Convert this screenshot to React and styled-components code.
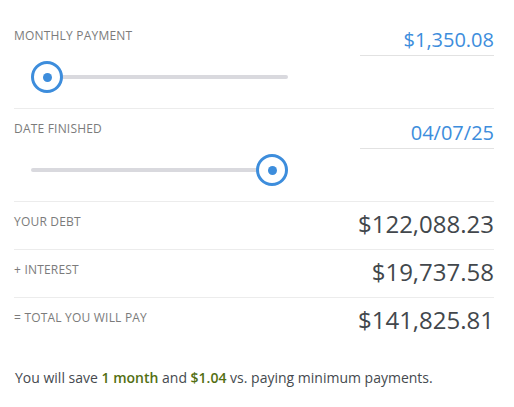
import React from "react";
import styled, { createGlobalStyle } from "styled-components";

const Global = createGlobalStyle`
  html, body { margin: 0; padding: 0; background: #fff; }
  body { font-family: "Open Sans", "Liberation Sans", sans-serif; }
  * { box-sizing: border-box; }
`;

const Wrapper = styled.div`
  width: 514px;
  padding: 16px 20px 0 14px;
`;

const Section = styled.div`
  height: 93px;
  border-bottom: 1px solid #ececec;
  padding-top: 12px;
`;

const Header = styled.div`
  display: flex;
  justify-content: space-between;
  align-items: flex-start;
`;

const Label = styled.div`
  font-size: 12px;
  line-height: 15px;
  letter-spacing: 0.2px;
  color: #7b7b7b;
  text-transform: uppercase;
  margin-top: ${(p) => p.$offset || 0}px;
`;

const InputValue = styled.div`
  width: 134px;
  text-align: right;
  font-size: 20px;
  line-height: 24px;
  color: #3d8ddc;
  padding-bottom: 3px;
  border-bottom: 1px solid #e2e2e2;
`;

const Slider = styled.div`
  position: relative;
  margin: 5px 0 0 17px;
  width: 257px;
  height: 32px;
  display: flex;
  align-items: center;
`;

const Track = styled.div`
  width: 100%;
  height: 4px;
  border-radius: 2px;
  background: #d9d9de;
`;

const Thumb = styled.div`
  position: absolute;
  top: 0;
  width: 32px;
  height: 32px;
  border-radius: 50%;
  border: 3px solid #3d8ddc;
  background: #fff;
  display: flex;
  align-items: center;
  justify-content: center;
  &::after {
    content: "";
    width: 9px;
    height: 9px;
    border-radius: 50%;
    background: #3d8ddc;
  }
`;

const Row = styled.div`
  height: 48px;
  padding-top: 6px;
  display: flex;
  justify-content: space-between;
  align-items: flex-start;
  border-bottom: ${(p) => (p.$last ? "none" : "1px solid #ececec")};
`;

const Amount = styled.div`
  font-size: 24px;
  line-height: 32px;
  color: #42474c;
`;

const Note = styled.p`
  margin: 22px 0 0 1px;
  font-size: 14px;
  line-height: 20px;
  color: #454a4f;
`;

const Highlight = styled.strong`
  font-weight: 600;
  color: #536f12;
`;

function SliderSection({ label, value, pos }) {
  return (
    <Section>
      <Header>
        <Label>{label}</Label>
        <InputValue>{value}</InputValue>
      </Header>
      <Slider>
        <Track />
        <Thumb style={{ left: `${pos * (257 - 32)}px` }} />
      </Slider>
    </Section>
  );
}

export default function App() {
  return (
    <>
      <Global />
      <Wrapper>
        <SliderSection label="Monthly Payment" value="$1,350.08" pos={0} />
        <SliderSection label="Date Finished" value="04/07/25" pos={1} />
        <Row>
          <Label $offset={6}>Your Debt</Label>
          <Amount>$122,088.23</Amount>
        </Row>
        <Row>
          <Label $offset={6}>+ Interest</Label>
          <Amount>$19,737.58</Amount>
        </Row>
        <Row $last>
          <Label $offset={6}>= Total You Will Pay</Label>
          <Amount>$141,825.81</Amount>
        </Row>
        <Note>
          You will save <Highlight>1 month</Highlight> and{" "}
          <Highlight>$1.04</Highlight> vs. paying minimum payments.
        </Note>
      </Wrapper>
    </>
  );
}
